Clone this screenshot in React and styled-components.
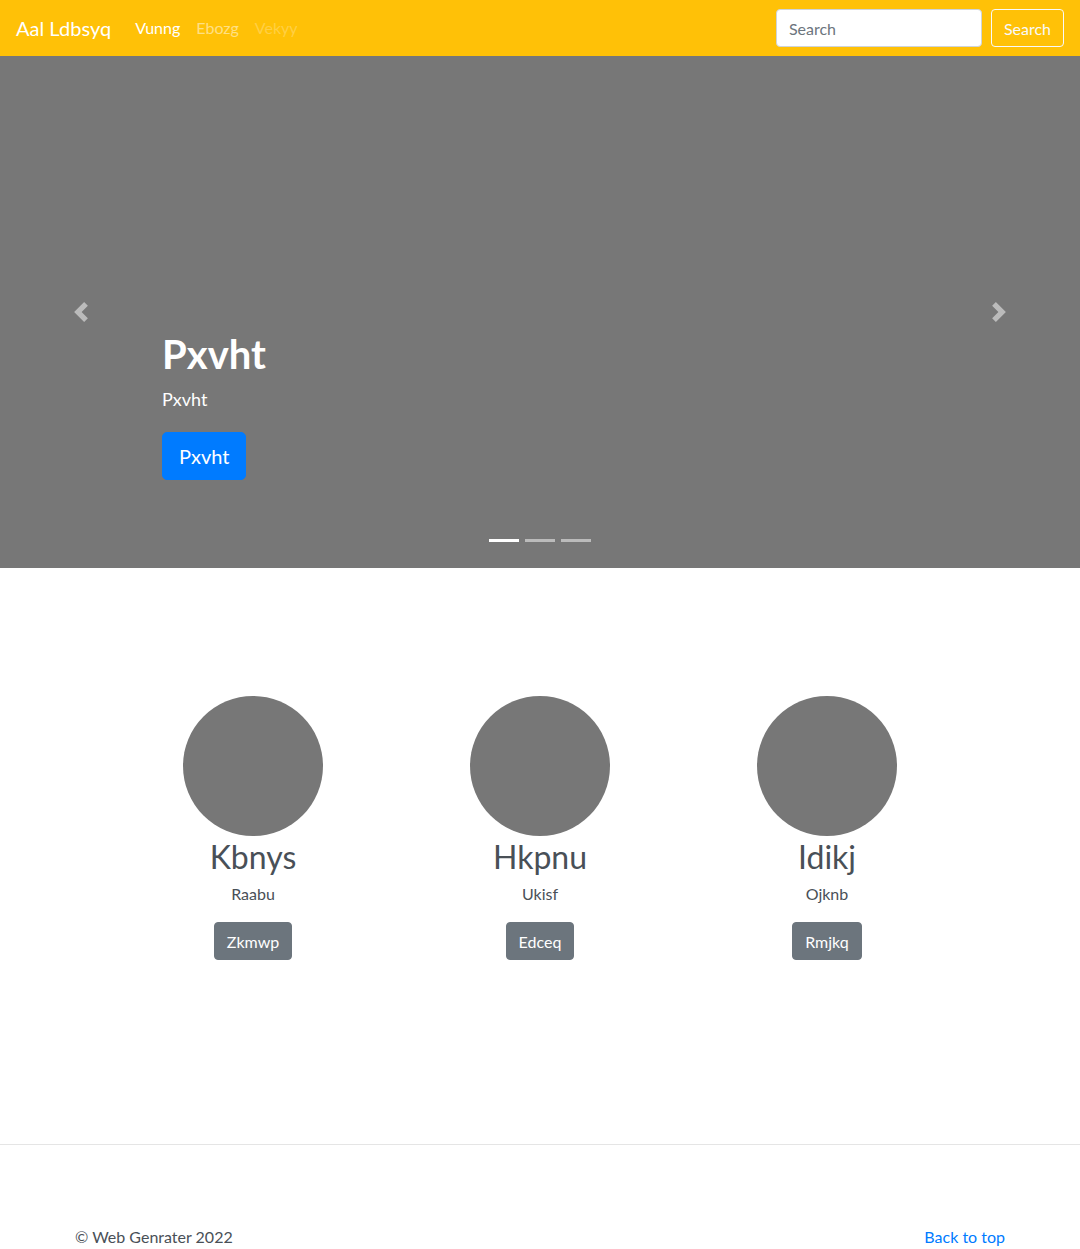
import styled, { createGlobalStyle } from 'styled-components';

const GlobalStyle = createGlobalStyle`
  * { box-sizing: border-box; }
  body {
    margin: 0;
    font-family: Lato, "Noto Sans", "Liberation Sans", sans-serif;
    font-size: 16px;
    line-height: 1.5;
    color: #212529;
    background: #fff;
  }
`;

const people = [
  { name: 'Kbnys', role: 'Raabu', action: 'Zkmwp' },
  { name: 'Hkpnu', role: 'Ukisf', action: 'Edceq' },
  { name: 'Idikj', role: 'Ojknb', action: 'Rmjkq' },
];

export default function App() {
  return (
    <>
      <GlobalStyle />
      <Navbar>
        <Brand href="#">Aal Ldbsyq</Brand>
        <NavList>
          <NavLink $state="active">Vunng</NavLink>
          <NavLink>Ebozg</NavLink>
          <NavLink $state="disabled">Vekyy</NavLink>
        </NavList>
        <SearchForm>
          <SearchInput placeholder="Search" />
          <OutlineButton type="button">Search</OutlineButton>
        </SearchForm>
      </Navbar>

      <Carousel>
        <Control $side="left">
          <svg width="20" height="20" viewBox="0 0 8 8">
            <path d="M5.25 0l-4 4 4 4 1.5-1.5L4.25 4l2.5-2.5L5.25 0z" fill="currentColor" />
          </svg>
        </Control>
        <Caption>
          <CaptionTitle>Pxvht</CaptionTitle>
          <CaptionText>Pxvht</CaptionText>
          <PrimaryButton>Pxvht</PrimaryButton>
        </Caption>
        <Control $side="right">
          <svg width="20" height="20" viewBox="0 0 8 8">
            <path d="M2.75 0l-1.5 1.5L3.75 4l-2.5 2.5L2.75 8l4-4-4-4z" fill="currentColor" />
          </svg>
        </Control>
        <Indicators>
          <Indicator $active />
          <Indicator />
          <Indicator />
        </Indicators>
      </Carousel>

      <Marketing>
        {people.map((p) => (
          <Column key={p.name}>
            <Avatar />
            <PersonName>{p.name}</PersonName>
            <PersonRole>{p.role}</PersonRole>
            <SecondaryButton>{p.action}</SecondaryButton>
          </Column>
        ))}
      </Marketing>

      <Divider />

      <Footer>
        <span>© Web Genrater 2022</span>
        <TopLink href="#">Back to top</TopLink>
      </Footer>
    </>
  );
}

const Navbar = styled.nav`
  height: 56px;
  background: #ffc107;
  display: flex;
  align-items: center;
  padding: 0 16px;
`;
const Brand = styled.a`
  color: #fff;
  font-size: 20px;
  text-decoration: none;
  margin-right: 16px;
  line-height: 1.5;
`;
const NavList = styled.div`
  display: flex;
  flex: 1;
`;
const NavLink = styled.a`
  padding: 8px;
  font-size: 16px;
  color: ${(p) =>
    p.$state === 'active'
      ? '#fff'
      : p.$state === 'disabled'
      ? 'rgba(255,255,255,.25)'
      : 'rgba(255,255,255,.5)'};
`;
const SearchForm = styled.form`
  display: flex;
  align-items: center;
  gap: 9px;
`;
const SearchInput = styled.input`
  width: 206px;
  height: 38px;
  padding: 6px 12px;
  font-family: inherit;
  font-size: 16px;
  color: #495057;
  border: 1px solid #ced4da;
  border-radius: 4px;
  outline: none;
  &::placeholder { color: #6c757d; }
`;
const OutlineButton = styled.button`
  height: 38px;
  padding: 6px 12px;
  font-family: inherit;
  font-size: 16px;
  color: #f8f9fa;
  background: transparent;
  border: 1px solid #f8f9fa;
  border-radius: 4px;
`;

const Carousel = styled.section`
  position: relative;
  height: 512px;
  background: #777;
  display: flex;
  align-items: flex-end;
  padding: 0 162px 88px;
`;
const Control = styled.div`
  position: absolute;
  top: 0;
  bottom: 0;
  ${(p) => (p.$side === 'left' ? 'left: 0;' : 'right: 0;')}
  width: 162px;
  display: flex;
  align-items: center;
  justify-content: center;
  color: #fff;
  opacity: 0.5;
`;
const Caption = styled.div`
  color: #fff;
`;
const CaptionTitle = styled.h1`
  margin: 0 0 8px;
  font-size: 40px;
  font-weight: 700;
  line-height: 1.2;
`;
const CaptionText = styled.p`
  margin: 0 0 19px;
  font-size: 18px;
`;
const PrimaryButton = styled.button`
  height: 48px;
  padding: 8px 16px;
  font-family: inherit;
  font-size: 20px;
  color: #fff;
  background: #007bff;
  border: 1px solid #007bff;
  border-radius: 5px;
`;
const Indicators = styled.div`
  position: absolute;
  left: 0;
  right: 0;
  bottom: 26px;
  display: flex;
  justify-content: center;
  gap: 6px;
`;
const Indicator = styled.span`
  width: 30px;
  height: 3px;
  background: #fff;
  opacity: ${(p) => (p.$active ? 1 : 0.5)};
`;

const Marketing = styled.section`
  width: 861px;
  margin: 0 auto;
  padding-top: 128px;
  display: grid;
  grid-template-columns: repeat(3, 1fr);
`;
const Column = styled.div`
  display: flex;
  flex-direction: column;
  align-items: center;
`;
const Avatar = styled.div`
  width: 140px;
  height: 140px;
  border-radius: 50%;
  background: #777;
`;
const PersonName = styled.h2`
  margin: 2px 0 0;
  font-size: 32px;
  font-weight: 400;
  line-height: 1.2;
  color: #495057;
`;
const PersonRole = styled.p`
  margin: 6px 0 16px;
  font-size: 16px;
  color: #495057;
`;
const SecondaryButton = styled.button`
  height: 38px;
  padding: 6px 12px;
  font-family: inherit;
  font-size: 16px;
  color: #fff;
  background: #6c757d;
  border: 1px solid #6c757d;
  border-radius: 4px;
`;

const Divider = styled.hr`
  margin: 184px 0 0;
  border: 0;
  border-top: 1px solid rgba(0, 0, 0, 0.1);
`;
const Footer = styled.footer`
  width: 960px;
  margin: 0 auto;
  padding: 80px 15px 0;
  display: flex;
  justify-content: space-between;
  color: #495057;
  font-size: 16px;
`;
const TopLink = styled.a`
  color: #007bff;
  text-decoration: none;
`;
